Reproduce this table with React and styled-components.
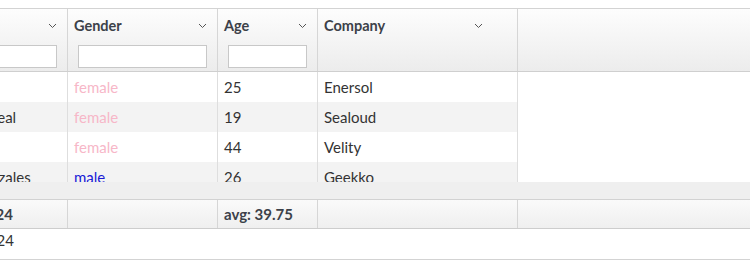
import React from "react";
import styled, { createGlobalStyle } from "styled-components";

const GlobalStyle = createGlobalStyle`
  html, body {
    margin: 0;
    padding: 0;
    background: #fff;
    font-family: Lato, "Noto Sans", sans-serif;
    color: #333;
  }
`;

// horizontal scroll position of the grid
const SCROLL_LEFT = 97;
const NAME_WIDTH = 165;

const columns = [
  { key: "name", width: NAME_WIDTH, filter: true },
  { key: "gender", title: "Gender", width: 150, filter: true },
  { key: "age", title: "Age", width: 100, filter: true },
  { key: "company", title: "Company", width: 200, filter: false },
];

const people = [
  { name: "Kim Ryan", gender: "female", age: 25, company: "Enersol" },
  { name: "Bernadette Neal", gender: "female", age: 19, company: "Sealoud" },
  { name: "Tara Holt", gender: "female", age: 44, company: "Velity" },
  { name: "Kendrick Gonzales", gender: "male", age: 26, company: "Geekko" },
];

const Page = styled.div`
  padding-top: 8px;
  width: 750px;
  overflow: hidden;
`;

const Grid = styled.div`
  border-top: 1px solid #d3d3d3;
  display: flex;
  flex-direction: column;
`;

const Track = styled.div`
  display: flex;
  margin-left: -${SCROLL_LEFT}px;
  width: ${750 + SCROLL_LEFT}px;
`;

const HeaderBar = styled(Track)`
  height: 62px;
  background: linear-gradient(#fdfdfd, #ececec);
  border-bottom: 1px solid #cfcfcf;
`;

const HeaderCell = styled.div`
  width: ${(p) => p.$w}px;
  flex: ${(p) => (p.$fill ? 1 : "none")};
  box-sizing: border-box;
  border-right: ${(p) => (p.$fill ? "none" : "1px solid #d6d6d6")};
  padding: 7px 10px 0 6px;
  display: flex;
  flex-direction: column;
  gap: 11px;
`;

const TitleRow = styled.div`
  display: flex;
  align-items: center;
  justify-content: space-between;
  height: 18px;
  padding-right: ${(p) => p.$inset}px;
`;

const Title = styled.span`
  font-size: 14.5px;
  font-weight: 700;
  color: #3c4149;
`;

const Chevron = styled.svg`
  width: 9px;
  height: 6px;
  margin-top: 2px;
`;

const FilterInput = styled.input`
  box-sizing: border-box;
  height: 23px;
  margin: 0 0 0 4px;
  width: calc(100% - 4px);
  border: 1px solid #c8c8c8;
  background: #fff;
  outline: none;
`;

const Body = styled.div`
  height: 110px;
  overflow: hidden;
`;

const Row = styled(Track)`
  height: 30px;
`;

const Cell = styled.div`
  width: ${(p) => p.$w}px;
  box-sizing: border-box;
  padding: 0 6px;
  line-height: 31px;
  font-size: 15px;
  white-space: nowrap;
  overflow: hidden;
  border-right: 1px solid #dedede;
  background: ${(p) => (p.$odd ? "#f3f3f3" : "#fff")};
  color: ${(p) =>
    p.$gender === "female" ? "#f7b7c8" : p.$gender === "male" ? "#1a1ad6" : "#333"};
`;

const ScrollBar = styled.div`
  height: 17px;
  background: #efefef;
  border-bottom: 1px solid #d2d2d2;
`;

const FooterBar = styled(Track)`
  height: 28px;
  background: linear-gradient(#fafafa, #efefef);
  border-bottom: 1px solid #cdcdcd;
`;

// aggregates in the first column sit flush with the visible edge
const FooterCell = styled.div`
  width: ${(p) => p.$w}px;
  flex: ${(p) => (p.$fill ? 1 : "none")};
  box-sizing: border-box;
  padding: 0 ${(p) => (p.$right ? NAME_WIDTH - SCROLL_LEFT - 14 : 6)}px 0 6px;
  line-height: 29px;
  font-size: 15px;
  font-weight: 700;
  color: #3c4149;
  border-right: ${(p) => (p.$fill ? "none" : "1px solid #d6d6d6")};
  text-align: ${(p) => (p.$right ? "right" : "left")};
`;

const Summary = styled(Track)`
  height: 30px;
  border-bottom: 1px solid #d3d3d3;
`;

const SummaryCell = styled.div`
  width: ${(p) => p.$w}px;
  box-sizing: border-box;
  padding: 0 ${NAME_WIDTH - SCROLL_LEFT - 14}px 0 6px;
  line-height: 23px;
  font-size: 15px;
  color: #333;
  text-align: right;
`;

const ChevronIcon = () => (
  <Chevron viewBox="0 0 9 6">
    <path d="M1 1l3.5 3.5L8 1" fill="none" stroke="#555" strokeWidth="1" />
  </Chevron>
);

export default function App() {
  return (
    <>
      <GlobalStyle />
      <Page>
        <Grid>
          <HeaderBar>
            {columns.map((c) => (
              <HeaderCell key={c.key} $w={c.width}>
                <TitleRow $inset={c.key === "company" ? 24 : 0}>
                  <Title>{c.title || ""}</Title>
                  <ChevronIcon />
                </TitleRow>
                {c.filter && <FilterInput />}
              </HeaderCell>
            ))}
            <HeaderCell $fill />
          </HeaderBar>
          <Body>
            {[...people, { name: "", gender: "", age: "", company: "" }].map((p, i) => (
              <Row key={i}>
                <Cell $w={NAME_WIDTH} $odd={i % 2 === 1}>{p.name}</Cell>
                <Cell $w={150} $odd={i % 2 === 1} $gender={p.gender}>{p.gender}</Cell>
                <Cell $w={100} $odd={i % 2 === 1}>{p.age}</Cell>
                <Cell $w={200} $odd={i % 2 === 1}>{p.company}</Cell>
              </Row>
            ))}
          </Body>
          <ScrollBar />
          <FooterBar>
            <FooterCell $w={NAME_WIDTH} $right>count: 24</FooterCell>
            <FooterCell $w={150} />
            <FooterCell $w={100}>avg: 39.75</FooterCell>
            <FooterCell $w={200} />
            <FooterCell $fill />
          </FooterBar>
          <Summary>
            <SummaryCell $w={NAME_WIDTH}>24</SummaryCell>
          </Summary>
        </Grid>
      </Page>
    </>
  );
}
